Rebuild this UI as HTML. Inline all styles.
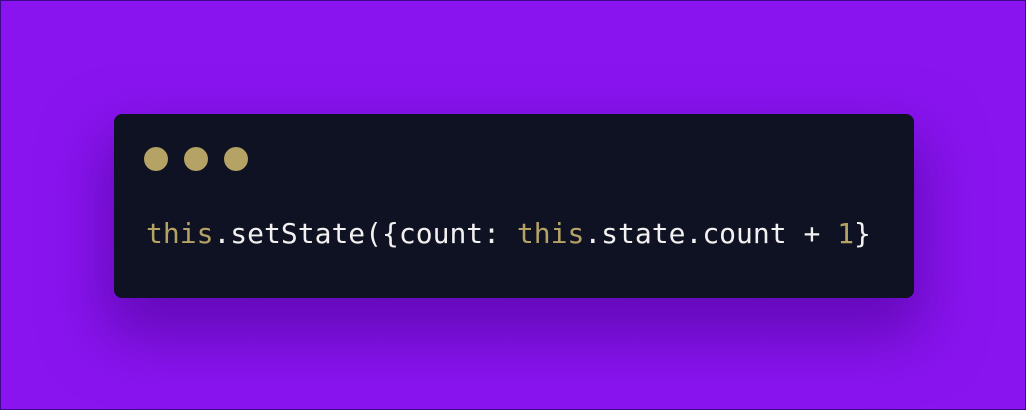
<!DOCTYPE html>
<html><head><meta charset="utf-8"><style>
html,body{margin:0;padding:0}
body{width:1026px;height:410px;background:#8a14f0;position:relative;overflow:hidden;box-sizing:border-box;border:1px solid #3a0a8a}
.card{position:absolute;left:113px;top:113px;width:800px;height:184px;background:#0e1222;border-radius:8px;box-shadow:0 30px 60px 10px rgba(70,0,140,0.55)}
.dot{position:absolute;top:33px;width:24px;height:24px;border-radius:50%;background:#b5a265}
.code{position:absolute;left:32px;top:103px;font-family:"DejaVu Sans Mono","Liberation Mono",monospace;font-size:28px;color:#f2f0f0;white-space:pre;line-height:34px}
.g{color:#b5a265}
</style></head><body>
<div class="card">
<div class="dot" style="left:30px"></div>
<div class="dot" style="left:70px"></div>
<div class="dot" style="left:110px"></div>
<div class="code"><span class="g">this</span>.setState({count: <span class="g">this</span>.state.count + <span class="g">1</span>}</div>
</div>
</body></html>
